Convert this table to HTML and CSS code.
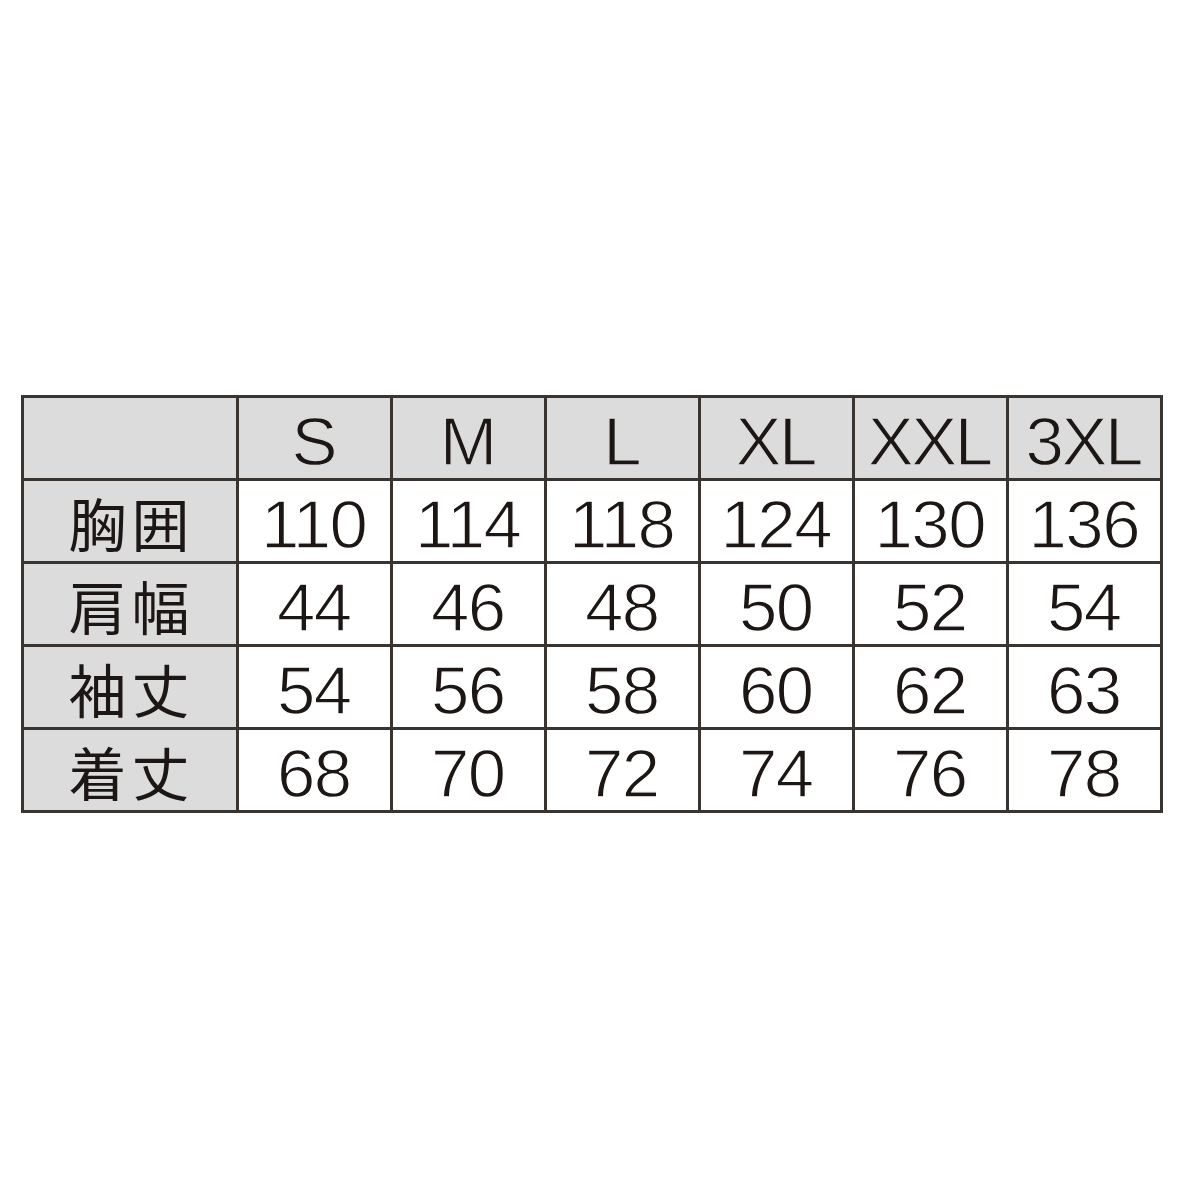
FILE: index.html
```html
<!DOCTYPE html>
<html lang="ja">
<head>
<meta charset="utf-8">
<title>サイズ表</title>
<link rel="stylesheet" href="styles.css">
</head>
<body>
<div class="page">
  <div class="size-table">
    <div class="cell head"></div>
    <div class="cell head">S</div>
    <div class="cell head">M</div>
    <div class="cell head">L</div>
    <div class="cell head">XL</div>
    <div class="cell head">XXL</div>
    <div class="cell head">3XL</div>

    <div class="cell label">胸囲</div>
    <div class="cell">110</div>
    <div class="cell">114</div>
    <div class="cell">118</div>
    <div class="cell">124</div>
    <div class="cell">130</div>
    <div class="cell">136</div>

    <div class="cell label">肩幅</div>
    <div class="cell">44</div>
    <div class="cell">46</div>
    <div class="cell">48</div>
    <div class="cell">50</div>
    <div class="cell">52</div>
    <div class="cell">54</div>

    <div class="cell label">袖丈</div>
    <div class="cell">54</div>
    <div class="cell">56</div>
    <div class="cell">58</div>
    <div class="cell">60</div>
    <div class="cell">62</div>
    <div class="cell">63</div>

    <div class="cell label">着丈</div>
    <div class="cell">68</div>
    <div class="cell">70</div>
    <div class="cell">72</div>
    <div class="cell">74</div>
    <div class="cell">76</div>
    <div class="cell">78</div>
  </div>
</div>
</body>
</html>
```

FILE: styles.css
```css
html, body {
  margin: 0;
  padding: 0;
  background: #ffffff;
}

.page {
  width: 1200px;
  height: 1200px;
  padding: 395px 0 0 21px;
  box-sizing: border-box;
}

.size-table {
  display: grid;
  grid-template-columns: 212px repeat(6, 151px);
  grid-template-rows: repeat(5, 80px);
  gap: 3px;
  padding: 3px;
  width: max-content;
  background: #3a3431;
}

.cell {
  background: #ffffff;
  display: flex;
  align-items: center;
  justify-content: center;
  padding-top: 6px;
  box-sizing: border-box;
  font-family: "Liberation Sans", Arial, "Noto Sans CJK JP", sans-serif;
  font-size: 69px;
  letter-spacing: -1.5px;
  text-indent: -1.5px;
  color: #1c1614;
  line-height: 1;
  -webkit-text-stroke: 1.3px #ffffff;
}

.head {
  background: #dcdcdc;
  letter-spacing: -2.5px;
  text-indent: -2.5px;
  -webkit-text-stroke: 1.3px #dcdcdc;
}

.label {
  background: #dcdcdc;
  font-family: "Noto Sans CJK JP", sans-serif;
  font-size: 58px;
  letter-spacing: 5px;
  text-indent: 0;
  padding-left: 3px;
  padding-top: 2px;
  -webkit-text-stroke: 0;
}
```
